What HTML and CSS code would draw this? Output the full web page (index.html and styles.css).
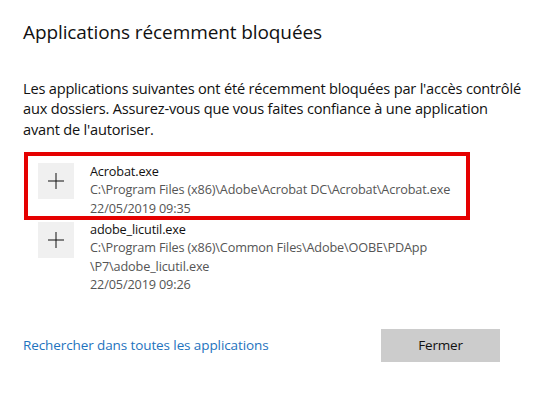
FILE: index.html
```html
<!DOCTYPE html>
<html lang="fr">
<head>
<meta charset="utf-8">
<title>Applications récemment bloquées</title>
<link rel="stylesheet" href="styles.css">
</head>
<body>
<main class="dialog">
  <h1 class="title">Applications récemment bloquées</h1>
  <p class="intro">Les applications suivantes ont été récemment bloquées par l'accès contrôlé aux dossiers. Assurez-vous que vous faites confiance à une application avant de l'autoriser.</p>
  <ul class="apps">
    <li class="app app-selected">
      <span class="app-icon"><svg width="16" height="16" viewBox="0 0 16 16"><path d="M8 0V16M0 8H16" stroke="#111" stroke-width="1" fill="none"/></svg></span>
      <div class="app-text">
        <div class="app-name">Acrobat.exe</div>
        <div class="app-meta">C:\Program Files (x86)\Adobe\Acrobat DC\Acrobat\Acrobat.exe</div>
        <div class="app-meta">22/05/2019 09:35</div>
      </div>
    </li>
    <li class="app">
      <span class="app-icon"><svg width="16" height="16" viewBox="0 0 16 16"><path d="M8 0V16M0 8H16" stroke="#111" stroke-width="1" fill="none"/></svg></span>
      <div class="app-text">
        <div class="app-name">adobe_licutil.exe</div>
        <div class="app-meta">C:\Program Files (x86)\Common Files\Adobe\OOBE\PDApp<br>\P7\adobe_licutil.exe</div>
        <div class="app-meta">22/05/2019 09:26</div>
      </div>
    </li>
  </ul>
  <div class="footer">
    <a class="link" href="#">Rechercher dans toutes les applications</a>
    <button class="btn" type="button">Fermer</button>
  </div>
</main>
</body>
</html>
```

FILE: styles.css
```css
html, body {
  margin: 0;
  padding: 0;
  background: #fff;
}
body {
  font-family: "Open Sans", "Noto Sans", sans-serif;
  color: #000;
}
.dialog {
  padding: 18px 20px 0 23px;
}
.title {
  margin: 0;
  font-size: 19px;
  font-weight: 400;
  letter-spacing: -0.1px;
  line-height: 28px;
  color: #111;
}
.intro {
  margin: 31.5px 0 0;
  font-size: 14.6px;
  letter-spacing: -0.2px;
  line-height: 20.5px;
  color: #111;
}
.apps {
  list-style: none;
  margin: 12.5px 0 0;
  padding: 0;
}
.app {
  display: flex;
  align-items: flex-start;
  gap: 16px;
  padding: 0 0 0 15px;
}
.app .app-icon {
  margin-top: 2px;
}
.app-selected {
  margin-left: 1px;
  width: 446px;
  height: 68px;
  box-sizing: border-box;
  border: 4px solid #e50000;
  padding: 6px 0 0 10px;
}
.app-selected .app-icon {
  margin-top: 1px;
}
.app-icon {
  flex: none;
  width: 36px;
  height: 36px;
  background: #f0f0f0;
  display: flex;
  align-items: center;
  justify-content: center;
}
.app-text {
  font-size: 12.7px;
  letter-spacing: -0.15px;
  line-height: 18.5px;
}
.app-name {
  color: #111;
}
.app-meta {
  color: #555;
}
.footer {
  display: flex;
  align-items: center;
  justify-content: space-between;
  margin-top: 35px;
  padding-right: 25px;
}
.link {
  color: #1e73be;
  text-decoration: none;
  font-size: 13.5px;
  letter-spacing: -0.1px;
}
.btn {
  width: 119px;
  height: 33px;
  border: 0;
  background: #cccccc;
  font-family: inherit;
  font-size: 13.5px;
  letter-spacing: -0.2px;
  color: #111;
  padding: 0;
}
```
